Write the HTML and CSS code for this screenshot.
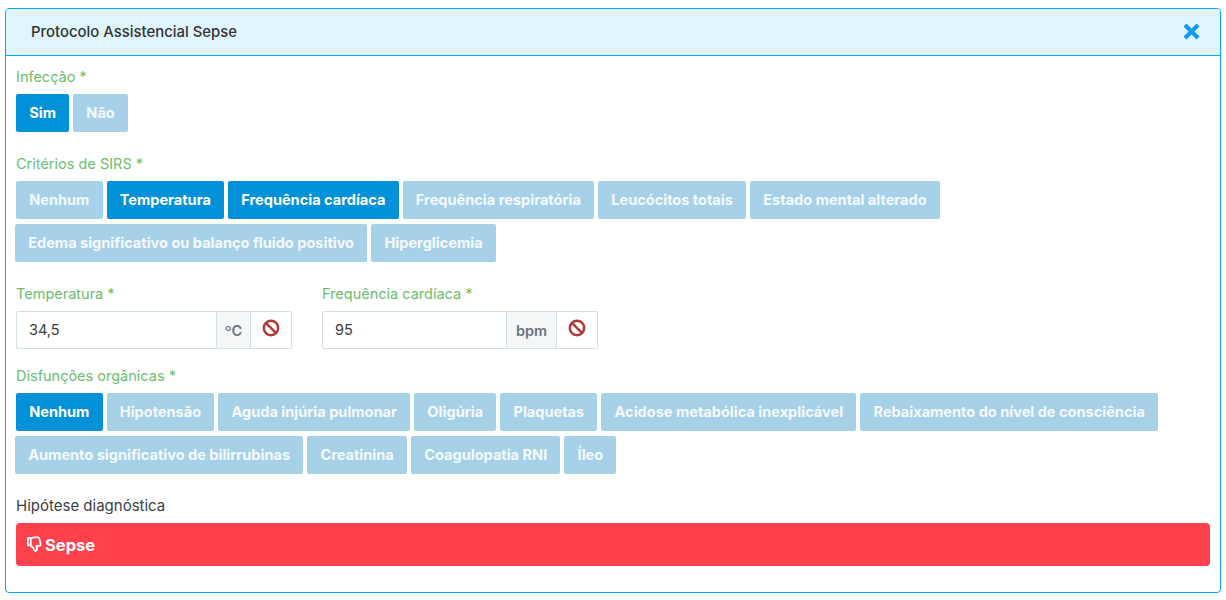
FILE: index.html
```html
<!DOCTYPE html>
<html lang="pt-BR">
<head>
<meta charset="utf-8">
<title>Protocolo Assistencial Sepse</title>
<link rel="stylesheet" href="styles.css">
</head>
<body>
<section class="panel">
  <header class="panel-head">
    <h1 class="panel-title">Protocolo Assistencial Sepse</h1>
    <svg class="close" viewBox="0 0 16 16" aria-label="Fechar"><path d="M2.500 2.500 13.500 13.500M13.500 2.500 2.500 13.500"/></svg>
  </header>
  <div class="panel-body">
    <div class="label first">Infecção *</div>
    <div class="chips">
      <span class="chip on">Sim</span><span class="chip">Não</span>
    </div>
    <div class="label sirs">Critérios de SIRS *</div>
    <div class="chips">
      <span class="chip">Nenhum</span><span class="chip on">Temperatura</span><span class="chip on">Frequência cardíaca</span><span class="chip">Frequência respiratória</span><span class="chip">Leucócitos totais</span><span class="chip">Estado mental alterado</span><span class="chip wrapped">Edema significativo ou balanço fluido positivo</span><span class="chip">Hiperglicemia</span>
    </div>
    <div class="fields">
      <div class="field">
        <div class="label">Temperatura *</div>
        <div class="group">
          <div class="input temp">34,5</div>
          <div class="unit celsius">ºC</div>
          <div class="clear"><svg viewBox="0 0 16 16"><circle cx="8" cy="8" r="6.400"/><path d="M3.600 3.600 12.400 12.400"/></svg></div>
        </div>
      </div>
      <div class="field">
        <div class="label">Frequência cardíaca *</div>
        <div class="group">
          <div class="input freq">95</div>
          <div class="unit bpm">bpm</div>
          <div class="clear"><svg viewBox="0 0 16 16"><circle cx="8" cy="8" r="6.400"/><path d="M3.600 3.600 12.400 12.400"/></svg></div>
        </div>
      </div>
    </div>
    <div class="label dis">Disfunções orgânicas *</div>
    <div class="chips">
      <span class="chip on">Nenhum</span><span class="chip">Hipotensão</span><span class="chip">Aguda injúria pulmonar</span><span class="chip">Oligúria</span><span class="chip">Plaquetas</span><span class="chip">Acidose metabólica inexplicável</span><span class="chip">Rebaixamento do nível de consciência</span><span class="chip wrapped">Aumento significativo de bilirrubinas</span><span class="chip">Creatinina</span><span class="chip">Coagulopatia RNI</span><span class="chip">Íleo</span>
    </div>
    <div class="label plain">Hipótese diagnóstica</div>
    <div class="alert">
      <svg class="thumb" viewBox="0 0 16 18"><path d="M1 2h3v8H1zM4 2.500c1.500-.6 2.500-1 4-1h3.500c1 0 1.700.6 1.800 1.500l1.200 5.500c.2 1.100-.6 2-1.600 2h-3l.6 2.600c.3 1.500-.6 3-1.700 3-.6 0-.9-.4-1-1-.4-2-1.300-3.400-3.800-4.600"/></svg>
      <span>Sepse</span>
    </div>
  </div>
</section>
</body>
</html>
```

FILE: styles.css
```css
* { box-sizing: border-box; }
html, body { margin: 0; padding: 0; background: #fff; }
body { font-family: "Inter", "Liberation Sans", sans-serif; color: #3a3f47; overflow: hidden; }
.panel { margin: 8px 5px 0; height: 585px; width: 1216px; border: 1px solid #03a9f4; border-radius: 4px; }
.panel-head { height: 47px; background: #e1f5fe; border-bottom: 1px solid #03a9f4; display: flex; align-items: center; justify-content: space-between; padding: 0 19px 1px 25px; border-radius: 3px 3px 0 0; }
.panel-title { margin: 0; font-size: 14.900px; font-weight: 500; color: #333; }
.close { width: 19px; height: 19px; margin-bottom: 1px; fill: none; stroke: #0d9bf2; stroke-width: 3.400; }
.panel-body { padding: 11px 10px 0 10px; }
.label { font-size: 14.500px; line-height: 20px; color: #6cc070; margin-bottom: 7px; }
.label.sirs { margin-top: 22px; }
.label.dis { margin-top: 17px; margin-bottom: 7px; }
.label.plain { font-size: 15px; color: #3a3f47; margin-top: 22px; margin-bottom: 7px; }
.chips { display: flex; flex-wrap: wrap; gap: 5px 4px; }
.chip { height: 38px; line-height: 38px; padding: 0 13.200px; border-radius: 2px; background: #a7d1e8; color: #f4f9fc; font-size: 14.560px; font-weight: 700; white-space: nowrap; }
.chip.on { background: #0091d9; color: #fff; }
.chip.wrapped { margin-left: -1px; }
.fields { display: flex; gap: 30px; margin-top: 22px; }
.group { display: flex; height: 38px; }
.input { height: 38px; line-height: 36px; padding: 0 12px; border: 1px solid #d3e0ea; border-radius: 2px 0 0 2px; font-size: 14.500px; color: #3a3f47; }
.input.temp { width: 201px; }
.input.freq { width: 185px; }
.unit { height: 38px; line-height: 38px; text-align: center; background: #f4f6f8; border: 1px solid #d3e0ea; border-left: 0; font-size: 14.500px; font-weight: 600; color: #6c757d; }
.unit.celsius { width: 34px; }
.unit.bpm { width: 50px; }
.clear { width: 41px; height: 38px; border: 1px solid #d3e0ea; border-left: 0; border-radius: 0 2px 2px 0; display: flex; align-items: center; justify-content: center; padding-bottom: 4px; }
.clear svg { width: 18px; height: 18px; fill: none; stroke: #b03a3a; stroke-width: 2.200; }
.alert { height: 43px; display: flex; align-items: center; gap: 3px; padding: 0 11px; background: #ff424d; border-radius: 4px; color: #fff; font-size: 16.500px; font-weight: 700; }
.thumb { width: 15px; height: 17px; fill: none; stroke: #fff; stroke-width: 1.900; stroke-linejoin: round; }
```
